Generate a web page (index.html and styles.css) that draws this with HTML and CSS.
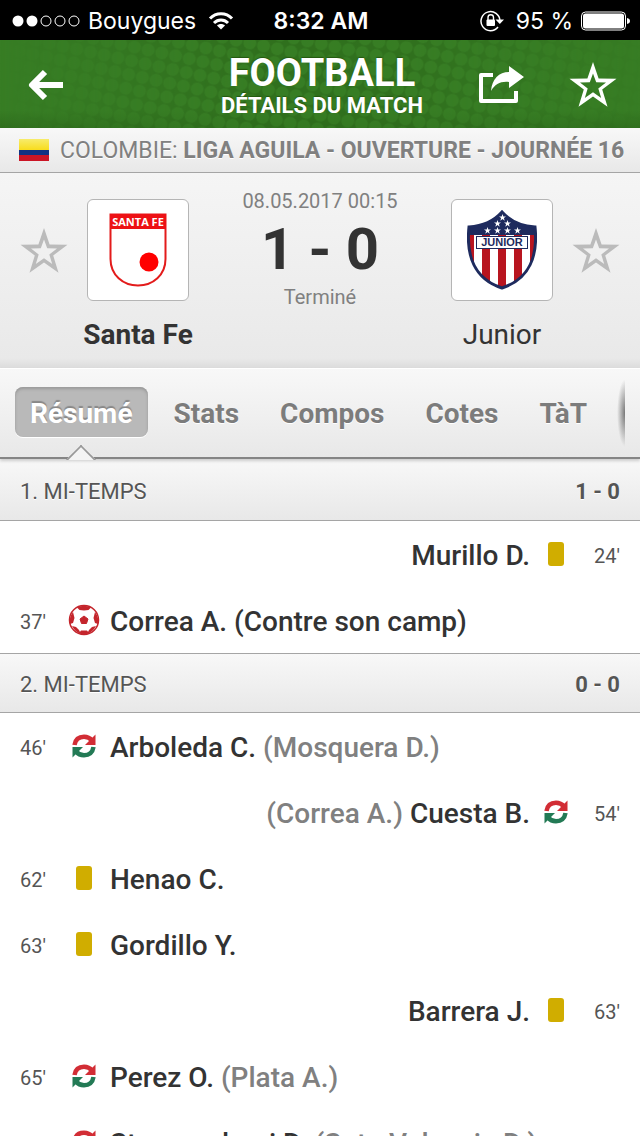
FILE: index.html
```html
<!DOCTYPE html>
<html lang="fr">

<head>
    <meta charset="utf-8">
    <meta name="viewport" content="width=device-width, initial-scale=1.0">
    <title>Football - Détails du match</title>
    <link rel="stylesheet" href="styles.css">
</head>

<body>
    <!-- icons used more than once -->
    <svg class="defs" aria-hidden="true">
        <symbol id="star" viewBox="0 0 48 46">
            <path d="M24 0 L29.6 16.5 L47.5 16.8 L33.2 27.5 L38.5 44.8 L24 34.5 L9.5 44.8 L14.8 27.5 L0.5 16.8 L18.4 16.5 Z M24 11.5 L27.2 20.3 L37 20.5 L29.3 26.5 L32.2 36 L24 30.3 L15.8 36 L18.7 26.5 L11 20.5 L20.8 20.3 Z" fill="currentColor" fill-rule="evenodd" />
        </symbol>
        <symbol id="sub" viewBox="0 0 24 24">
            <path d="M2.5 11 C3.5 5 7.5 2.8 12 2.8 C15.500 2.8 18 4 20 6.500" fill="none" stroke="#d22d35" stroke-width="4.5" />
            <path d="M23.500 0.500 V11 H13 Z" fill="#d22d35" />
            <path d="M21.500 13 C20.500 19 16.500 21.200 12 21.200 C8.500 21.200 6 20 4 17.500" fill="none" stroke="#237a55" stroke-width="4.5" />
            <path d="M0.500 23.500 V13 H11 Z" fill="#237a55" />
        </symbol>
        <symbol id="small-star" viewBox="0 0 10 10">
            <path d="M5 0 L6.200 3.500 H10 L7 5.800 L8.100 9.500 L5 7.300 L1.900 9.500 L3 5.800 L0 3.500 H3.800 Z" fill="#fff" />
        </symbol>
    </svg>

    <div class="status-bar">
        <div class="status-left">
            <svg width="68" height="14" viewBox="0 0 68 14">
                <circle cx="6" cy="7" r="5.500" fill="#fff" />
                <circle cx="20" cy="7" r="5.500" fill="#fff" />
                <g fill="none" stroke="#fff">
                    <circle cx="34" cy="7" r="5" />
                    <circle cx="48" cy="7" r="5" />
                    <circle cx="62" cy="7" r="5" />
                </g>
            </svg>
            <span>Bouygues</span>
            <svg class="wifi" width="26" height="20" viewBox="0 0 26 20">
                <g fill="none" stroke="#fff" stroke-width="3">
                    <path d="M2 7.500 C8 1 18 1 24 7.500" />
                    <path d="M6 12 C10 8 16 8 20 12" />
                </g>
                <path d="M9 14.500 C11 12.500 15 12.500 17 14.500 L13 18.500 Z" fill="#fff" />
            </svg>
        </div>
        <time class="clock">8:32 AM</time>
        <div class="status-right">
            <svg width="24" height="22" viewBox="0 0 24 22">
                <path d="M18 17 A9.500 9.500 0 1 1 20 11" fill="none" stroke="#fff" stroke-width="1.500" />
                <path d="M15.500 9.500 H24 L19.800 14 Z" fill="#fff" />
                <rect x="6.500" y="9.500" width="8.500" height="6.500" rx="1" fill="#fff" />
                <path d="M8 10 V7.500 A2.700 2.700 0 0 1 13.500 7.500 V10" fill="none" stroke="#fff" stroke-width="1.400" />
            </svg>
            <span class="percent">95 %</span>
            <svg width="49" height="20" viewBox="0 0 49 20">
                <rect x="0.500" y="1" width="44" height="18" rx="4" fill="none" stroke="#fff" />
                <rect x="2" y="2.500" width="41" height="15" rx="2.500" fill="#fff" />
                <path d="M46 7 C50 7.500 50 12.500 46 13 Z" fill="#fff" />
            </svg>
        </div>
    </div>

    <header class="top">
        <svg class="halftone" width="100%" height="100%" aria-hidden="true">
            <defs>
                <pattern id="dots" width="14" height="14" patternUnits="userSpaceOnUse" patternTransform="rotate(12)">
                    <rect width="14" height="14" fill="#2d6b1b" />
                    <circle cx="7" cy="7" r="6.500" fill="#377d24" />
                </pattern>
                <linearGradient id="fade">
                    <stop offset="0" stop-color="#000" />
                    <stop offset="0.400" stop-color="#bbb" />
                    <stop offset="0.650" stop-color="#aaa" />
                    <stop offset="1" stop-color="#111" />
                </linearGradient>
                <mask id="edges">
                    <rect width="100%" height="100%" fill="url(#fade)" />
                </mask>
            </defs>
            <rect width="100%" height="100%" fill="url(#dots)" mask="url(#edges)" />
        </svg>
        <button class="icon-button" aria-label="Retour">
            <svg width="38" height="34" viewBox="0 0 38 34">
                <path d="M36 17 H5 M18 4 L5 17 L18 30" fill="none" stroke="#fff" stroke-width="6" stroke-linejoin="round" />
            </svg>
        </button>
        <div class="title">
            <h1>FOOTBALL</h1>
            <p>DÉTAILS DU MATCH</p>
        </div>
        <div class="actions">
            <button class="icon-button" aria-label="Partager">
                <svg width="46" height="38" viewBox="0 0 46 38">
                    <path d="M14 9 H2 V35 H37 V25" fill="none" stroke="#fff" stroke-width="4" stroke-linejoin="round" />
                    <path d="M12 25 C13 13 20 6 30 6 V0 L45 11 L30 22 V16 C22 15 16 18 12 25 Z" fill="#fff" />
                </svg>
            </button>
            <button class="icon-button" aria-label="Ajouter le match aux favoris">
                <svg width="48" height="46"><use href="#star" /></svg>
            </button>
        </div>
    </header>

    <div class="league">
        <svg width="30" height="22" viewBox="0 0 30 22">
            <defs>
                <linearGradient id="yellow" x2="0" y2="1">
                    <stop offset="0" stop-color="#f7ec6c" />
                    <stop offset="1" stop-color="#f8dc1c" />
                </linearGradient>
            </defs>
            <rect width="30" height="11" fill="url(#yellow)" />
            <rect y="11" width="30" height="6" fill="#123282" />
            <rect y="16" width="30" height="6" fill="#cb1525" />
        </svg>
        <p>COLOMBIE: <b>LIGA AGUILA - OUVERTURE - JOURNÉE 16</b></p>
    </div>

    <section class="match">
        <button class="icon-button favorite" aria-label="Ajouter Santa Fe aux favoris">
            <svg width="48" height="46"><use href="#star" /></svg>
        </button>
        <div class="team">
            <div class="logo">
                <svg width="58" height="74" viewBox="0 0 58 74">
                    <path d="M1.500 1.500 H56.500 V46 C56.500 62 44 72.500 29 72.500 C14 72.500 1.500 62 1.500 46 Z" fill="#fff" stroke="#e31b1b" stroke-width="2" />
                    <rect x="1" y="1" width="56" height="15" fill="#ed1115" />
                    <circle cx="40" cy="49" r="9.500" fill="#f00" />
                    <text class="crest-text" x="29" y="13" text-anchor="middle" fill="#fff">SANTA FE</text>
                </svg>
            </div>
            <h2 class="winner">Santa Fe</h2>
        </div>
        <div class="result">
            <p>08.05.2017 00:15</p>
            <p class="score">1 - 0</p>
            <p>Terminé</p>
        </div>
        <div class="team">
            <div class="logo">
                <svg width="70" height="80" viewBox="0 0 70 80">
                    <defs>
                        <clipPath id="shield">
                            <path d="M35 2 C43 11 54 16 68 17 C71 45 63 69 35 78 C7 69 -1 45 2 17 C16 16 27 11 35 2 Z" />
                        </clipPath>
                    </defs>
                    <g clip-path="url(#shield)">
                        <rect width="70" height="80" fill="#fff" />
                        <g fill="#b8151f">
                            <rect x="0" y="24" width="7" height="56" />
                            <rect x="15" y="24" width="8" height="56" />
                            <rect x="31" y="24" width="8" height="56" />
                            <rect x="47" y="24" width="8" height="56" />
                            <rect x="63" y="24" width="7" height="56" />
                        </g>
                        <rect width="70" height="25" fill="#1e2b5e" />
                    </g>
                    <path d="M35 2 C43 11 54 16 68 17 C71 45 63 69 35 78 C7 69 -1 45 2 17 C16 16 27 11 35 2 Z" fill="none" stroke="#1e2b5e" stroke-width="3" />
                    <use href="#small-star" x="32" y="4" width="7" height="7" />
                    <use href="#small-star" x="27" y="10" width="7" height="7" />
                    <use href="#small-star" x="37" y="10" width="7" height="7" />
                    <use href="#small-star" x="17" y="17" width="7" height="7" />
                    <use href="#small-star" x="27" y="17" width="7" height="7" />
                    <use href="#small-star" x="37" y="17" width="7" height="7" />
                    <use href="#small-star" x="47" y="17" width="7" height="7" />
                    <rect x="9.500" y="26.500" width="51" height="12" fill="#fff" stroke="#1e2b5e" />
                    <text class="crest-text wide" x="35" y="36" text-anchor="middle" fill="#1e2b5e">JUNIOR</text>
                </svg>
            </div>
            <h2>Junior</h2>
        </div>
        <button class="icon-button favorite" aria-label="Ajouter Junior aux favoris">
            <svg width="48" height="46"><use href="#star" /></svg>
        </button>
    </section>

    <nav class="tabs">
        <button class="tab selected">Résumé</button>
        <button class="tab">Stats</button>
        <button class="tab">Compos</button>
        <button class="tab">Cotes</button>
        <button class="tab">TàT</button>
    </nav>

    <main class="summary">
        <section>
            <h3 class="period"><span>1. MI-TEMPS</span> <b>1 - 0</b></h3>
            <ul class="events">
                <li class="event away">
                    <span class="minute">24'</span>
                    <span class="icon"><i class="card"></i></span>
                    <p>Murillo D.</p>
                </li>
                <li class="event">
                    <span class="minute">37'</span>
                    <span class="icon">
                        <svg width="32" height="32" viewBox="0 0 32 32">
                            <circle cx="16" cy="16" r="14.500" fill="#fff" stroke="#c4252c" stroke-width="1.500" />
                            <g fill="#c4252c">
                                <path d="M16 12 L20 15 L18.500 19.500 H13.500 L12 15 Z" stroke="#c4252c" stroke-linejoin="round" />
                                <path d="M9 3.500 Q16 0 23 3.500 L20.500 6 L16 6.500 L11.500 6 Z" />
                                <path d="M27 8 Q31 13 30 20 L27 19 L25.500 14 Z" />
                                <path d="M5 8 Q1 13 2 20 L5 19 L6.500 14 Z" />
                                <path d="M28 22 Q25 28 19 30 L21 26 L24 23 Z" />
                                <path d="M4 22 Q7 28 13 30 L11 26 L8 23 Z" />
                                <path d="M11 29 L13 26.500 H19 L21 29 Q16 32 11 29 Z" />
                            </g>
                        </svg>
                    </span>
                    <p>Correa A. (Contre son camp)</p>
                </li>
            </ul>
        </section>
        <section>
            <h3 class="period"><span>2. MI-TEMPS</span> <b>0 - 0</b></h3>
            <ul class="events">
                <li class="event">
                    <span class="minute">46'</span>
                    <span class="icon"><svg width="24" height="24"><use href="#sub" /></svg></span>
                    <p>Arboleda C. <span class="out">(Mosquera D.)</span></p>
                </li>
                <li class="event away">
                    <span class="minute">54'</span>
                    <span class="icon"><svg width="24" height="24"><use href="#sub" /></svg></span>
                    <p><span class="out">(Correa A.)</span> Cuesta B.</p>
                </li>
                <li class="event">
                    <span class="minute">62'</span>
                    <span class="icon"><i class="card"></i></span>
                    <p>Henao C.</p>
                </li>
                <li class="event">
                    <span class="minute">63'</span>
                    <span class="icon"><i class="card"></i></span>
                    <p>Gordillo Y.</p>
                </li>
                <li class="event away">
                    <span class="minute">63'</span>
                    <span class="icon"><i class="card"></i></span>
                    <p>Barrera J.</p>
                </li>
                <li class="event">
                    <span class="minute">65'</span>
                    <span class="icon"><svg width="24" height="24"><use href="#sub" /></svg></span>
                    <p>Perez O. <span class="out">(Plata A.)</span></p>
                </li>
                <li class="event">
                    <span class="minute">77'</span>
                    <span class="icon"><svg width="24" height="24"><use href="#sub" /></svg></span>
                    <p>Stracqualursi D. <span class="out">(Soto Valencia D.)</span></p>
                </li>
            </ul>
        </section>
    </main>
</body>

</html>
```
FILE: styles.css
```css
* {
    box-sizing: border-box;
}

body {
    display: flex;
    flex-direction: column;
    height: 100vh;
    margin: 0;
    overflow: hidden;
    background-color: #fff;
    color: #333;
    font-family: Roboto, "Liberation Sans", sans-serif;
}

h1, h2, h3, p, ul {
    margin: 0;
    padding: 0;
    font-weight: 400;
}

svg {
    display: block;
    flex: none;
}

button {
    padding: 0;
    border: 0;
    background: none;
    font-family: inherit;
}

.defs {
    position: absolute;
    width: 0;
    height: 0;
}

.status-bar {
    display: grid;
    grid-template-columns: 1fr auto 1fr;
    align-items: center;
    flex: none;
    height: 40px;
    padding: 2px 10px 0 12px;
    background-color: #000;
    color: #fff;
    font-family: Inter, Roboto, sans-serif;
    font-size: 23px;
}

.status-left, .status-right {
    display: flex;
    align-items: center;
    gap: 8px;
}

.wifi {
    margin-left: 4px;
}

.status-right {
    justify-content: flex-end;
}

.percent {
    padding-left: 4px;
}

.clock {
    font-weight: 600;
}

.top {
    display: grid;
    grid-template-columns: 1fr auto 1fr;
    align-items: center;
    position: relative;
    flex: none;
    height: 88px;
    padding: 2px 23px 0 27px;
    background: linear-gradient(#377d24 80%, #306f1e);
    color: #fff;
    text-align: center;
    text-shadow: 0 -1px 1px #24580f;
}

.halftone {
    position: absolute;
    top: 0;
    left: 0;
}

.top .icon-button, .title {
    position: relative;
    color: #fff;
}

h1 {
    padding-top: 4px;
    font-size: 38px;
    font-weight: 700;
    line-height: 38px;
}

.title p {
    font-size: 22px;
    font-weight: 700;
    line-height: 28px;
}

.actions {
    display: flex;
    align-items: center;
    justify-content: flex-end;
    gap: 44px;
}

.league {
    display: flex;
    align-items: center;
    gap: 11px;
    flex: none;
    height: 45px;
    padding: 0 18px 0 19px;
    border-bottom: 1px solid #a5a5a5;
    background: linear-gradient(#f8f8f8, #e8e8e8);
    color: #808080;
    font-size: 23px;
    white-space: nowrap;
    text-shadow: 0 1px #fff;
}

.match {
    display: flex;
    flex: none;
    height: 195px;
    padding: 17px 20px 0;
    background: linear-gradient(#f5f5f5, #e9e9e9 95%, #dcdcdc);
}

.favorite {
    align-self: flex-start;
    margin-top: 38px;
    color: #bbb;
}

.team {
    display: flex;
    flex-direction: column;
    align-items: center;
    gap: 16px;
    width: 140px;
    padding-top: 9px;
}

.logo {
    display: flex;
    align-items: center;
    justify-content: center;
    width: 102px;
    height: 102px;
    border: 1px solid #b5b5b5;
    border-radius: 6px;
    background-color: #fff;
}

.crest-text {
    font-family: "Open Sans", sans-serif;
    font-size: 11px;
    font-weight: 700;
}

.crest-text.wide {
    font-family: "Liberation Sans", sans-serif;
}

h2 {
    font-size: 28px;
    line-height: 36px;
}

.winner {
    font-weight: 700;
}

.result {
    flex: 1;
    color: #808080;
    font-size: 20px;
    line-height: 22px;
    text-align: center;
}

.score {
    padding: 8px 0;
    color: #333;
    font-size: 58px;
    font-weight: 700;
    line-height: 58px;
}

.tabs {
    display: flex;
    align-items: center;
    gap: 11px;
    position: relative;
    flex: none;
    height: 91px;
    padding: 0 15px 2px;
    border-top: 1px solid #fff;
    border-bottom: 2px solid #858585;
    background: linear-gradient(#f8f8f8, #e8e8e8);
    box-shadow: 0 2px 3px #ccc;
}

/* shade that hints at more tabs to the right */
.tabs::after {
    content: "";
    position: absolute;
    top: 10px;
    right: 15px;
    width: 8px;
    height: 68px;
    background: radial-gradient(ellipse at right, #777, transparent 70%);
}

.tab {
    position: relative;
    height: 50px;
    padding: 2px 15px 0;
    border-radius: 8px;
    color: #7c7c7c;
    font-size: 28px;
    font-weight: 700;
    text-shadow: 0 1px #fff;
}

.selected {
    background-color: #b9b9b9;
    box-shadow: inset 0 2px 3px #999, 0 1px #fff;
    color: #fff;
    text-shadow: 0 -2px 1px #888;
}

/* notch pointing at the selected tab */
.selected::after {
    content: "";
    position: absolute;
    top: 62px;
    left: 50%;
    width: 20px;
    height: 20px;
    margin-left: -11px;
    border-top: 2px solid #999;
    border-left: 2px solid #999;
    background-color: #f4f4f4;
    transform: rotate(45deg);
    clip-path: polygon(0 0, 100% 0, 0 100%);
}

.summary {
    flex: 1;
    min-height: 0;
    overflow: hidden;
}

.period {
    display: flex;
    align-items: center;
    justify-content: space-between;
    height: 60px;
    padding: 2px 20px 0;
    border-top: 1px solid #a5a5a5;
    border-bottom: 1px solid #a5a5a5;
    background: linear-gradient(#f8f8f8, #e8e8e8);
    color: #555;
    font-size: 22px;
    text-shadow: 0 1px #fff;
}

section:first-child .period {
    height: 62px;
    padding-top: 4px;
    border-top: 0;
}

.events {
    list-style: none;
}

.event {
    display: flex;
    align-items: center;
    height: 66px;
    padding: 0 20px;
    font-size: 28px;
}

.event p {
    padding: 3px 10px 0;
    font-weight: 500;
    white-space: nowrap;
}

.away {
    flex-direction: row-reverse;
}

.minute {
    width: 48px;
    padding-top: 3px;
    color: #555;
    font-size: 20px;
}

.away .minute {
    text-align: right;
}

.icon {
    display: flex;
    justify-content: center;
    width: 32px;
}

.card {
    width: 16px;
    height: 24px;
    border-radius: 3px;
    background-color: #d0ad00;
}

.out {
    color: #808080;
}
```
